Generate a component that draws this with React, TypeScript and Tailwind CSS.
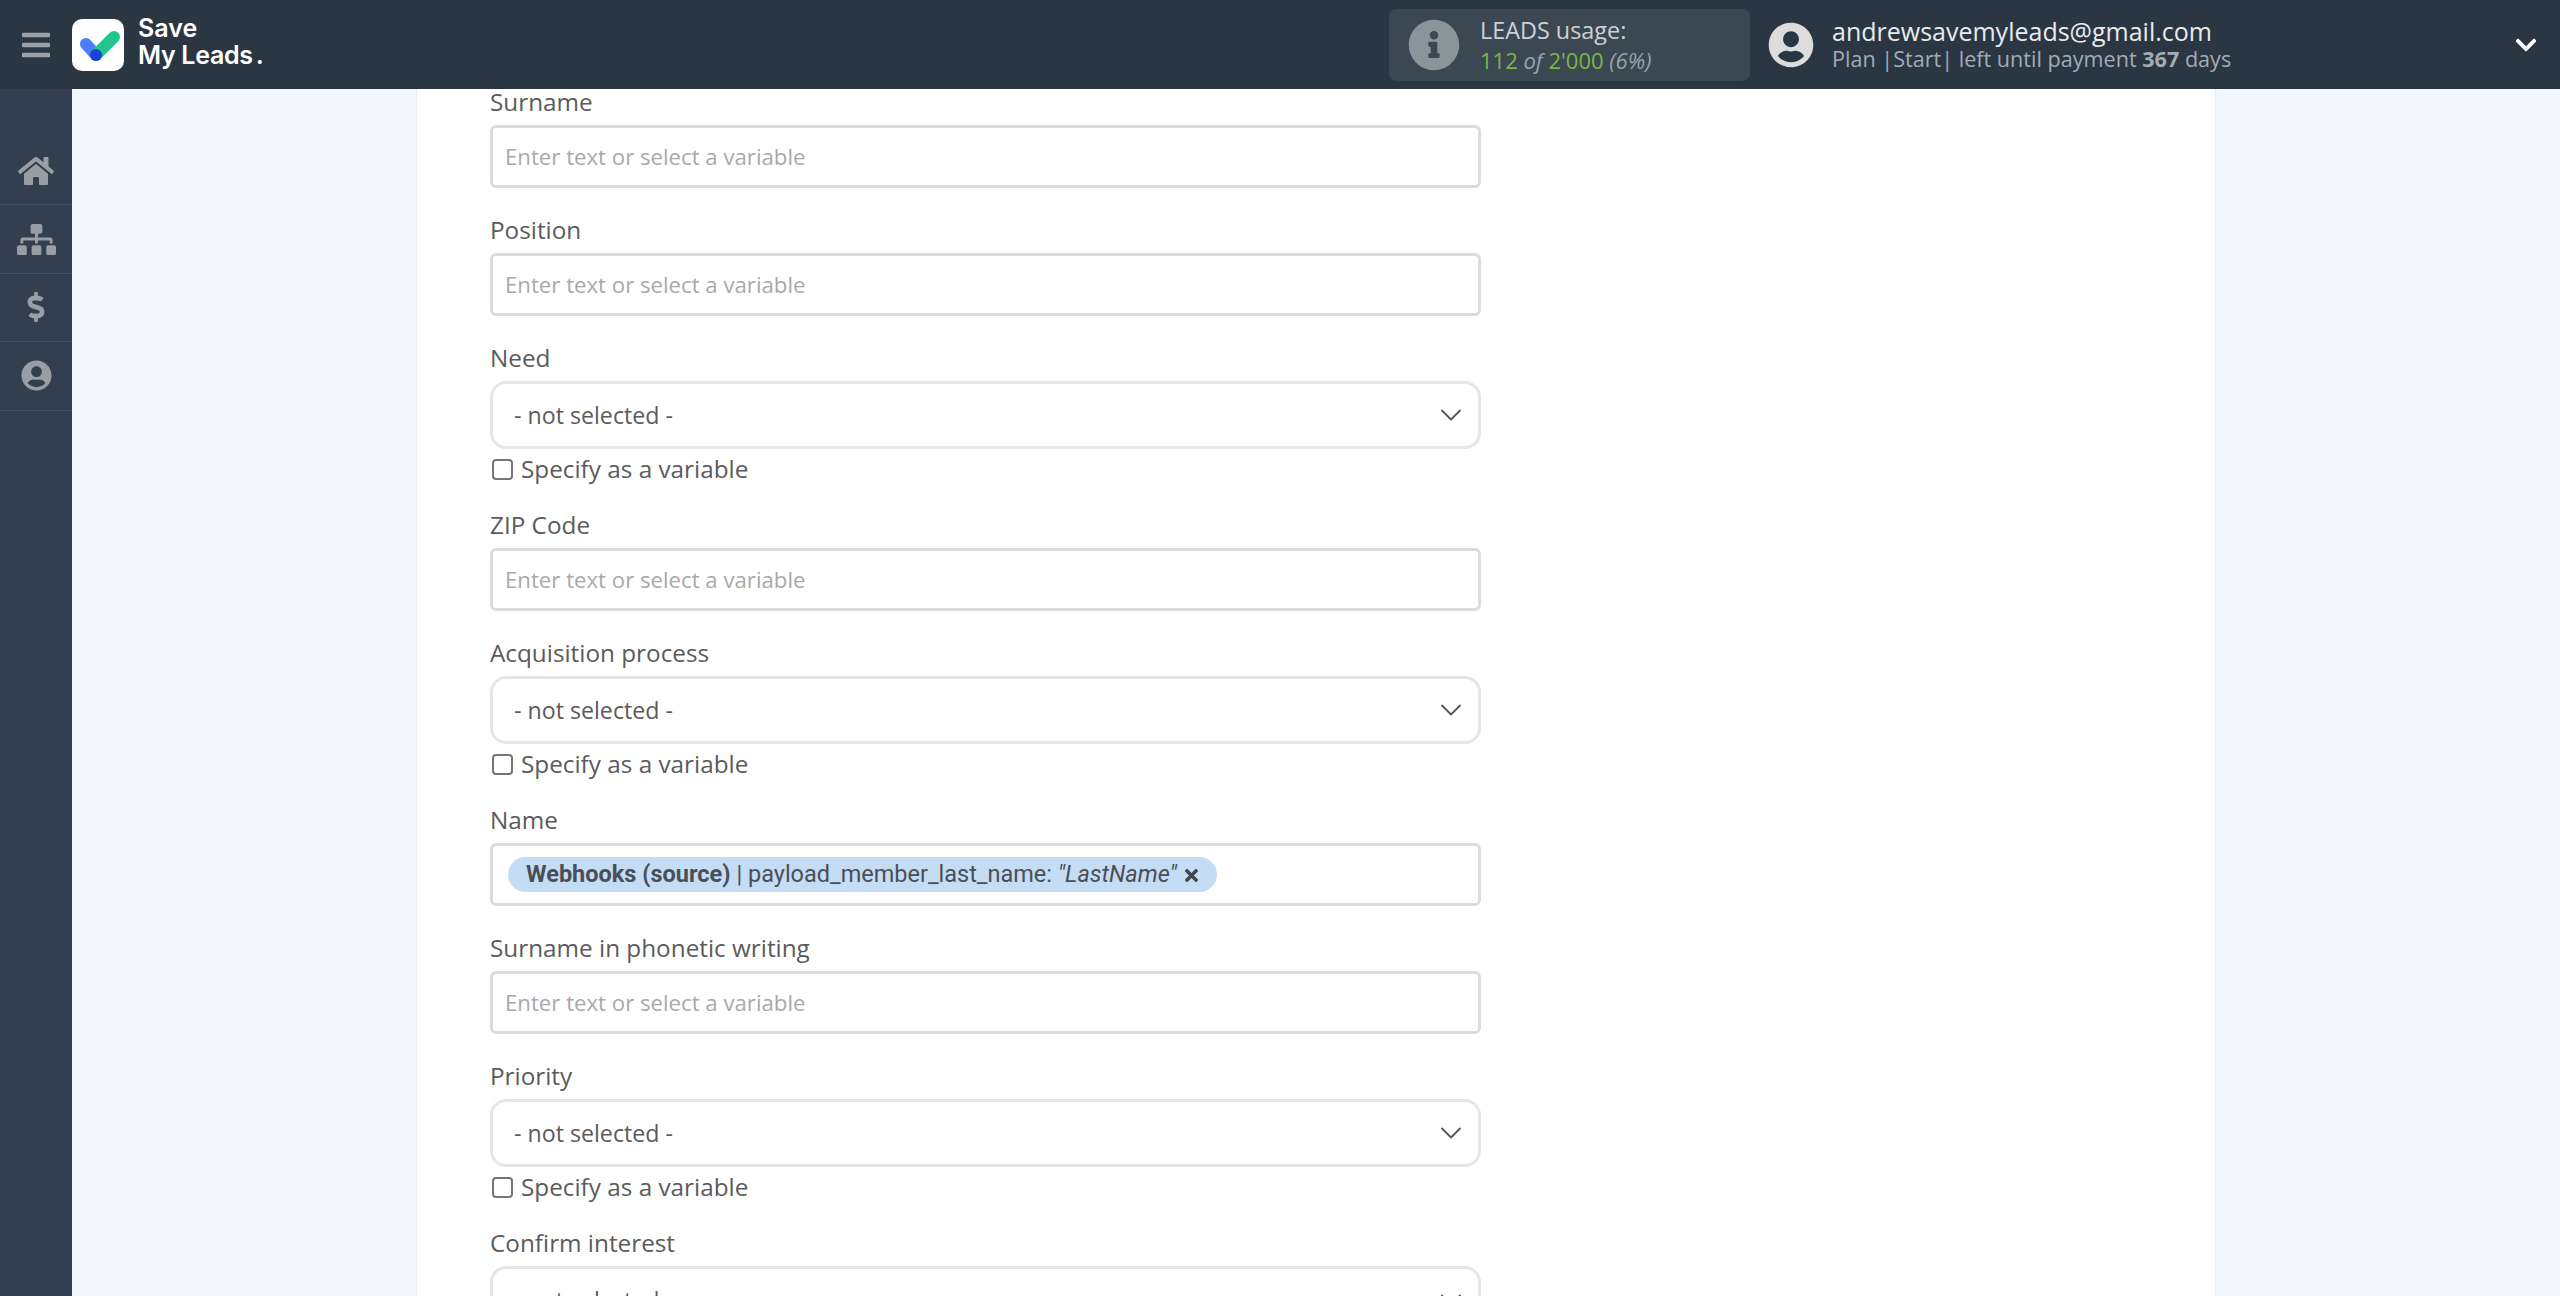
import { ChevronDown } from 'lucide-react';
import {
  FaBars,
  FaChevronDown,
  FaDollarSign,
  FaHome,
  FaInfoCircle,
  FaSitemap,
  FaTimes,
  FaUserCircle,
} from 'react-icons/fa';

const PLACEHOLDER = 'Enter text or select a variable';

function Label({ children }: { children: string }) {
  return <div className="mb-3 h-6 text-[24.3px] leading-[25px] font-medium text-[#5b5b5b]">{children}</div>;
}

function TextField({ label }: { label: string }) {
  return (
    <div className="mb-[29px]">
      <Label>{label}</Label>
      <div className="flex h-[63px] items-center rounded-[6px] border-[3px] border-[#dcdcdc] bg-white pl-[12px] text-[22.2px] text-[#a9a9a9]">
        {PLACEHOLDER}
      </div>
    </div>
  );
}

function SelectField({ label, withCheck = true }: { label: string; withCheck?: boolean }) {
  return (
    <div className="mb-[31px]">
      <Label>{label}</Label>
      <div className="flex h-[68px] items-center justify-between rounded-[16px] border-[3px] border-[#e6e6e6] bg-white pr-[9px] pl-[21px] text-[23.2px] text-[#5b5b5b]">
        <span>- not selected -</span>
        <ChevronDown size={36} strokeWidth={1.2} className="text-[#555555]" />
      </div>
      {withCheck ? (
        <div className="mt-2 flex h-6 items-center gap-[8px] pl-[2px] text-[24.3px] font-medium text-[#5b5b5b]">
          <span className="h-[21px] w-[21px] rounded-[4px] border-2 border-[#767676] bg-white" />
          <span>Specify as a variable</span>
        </div>
      ) : null}
    </div>
  );
}

function ChipField({ label }: { label: string }) {
  return (
    <div className="mb-[29px]">
      <Label>{label}</Label>
      <div className="flex h-[63px] items-center rounded-[6px] border-[3px] border-[#dcdcdc] bg-white pl-[15px]">
        <span className="flex h-[35px] items-center gap-[5px] rounded-[18px] bg-[#c5dcf5] pt-px pr-[16px] pl-[18px] font-['Roboto',sans-serif] text-[23.5px] text-[#4a4f57]">
          <span>
            <b className="font-bold">Webhooks (source)</b> | payload_member_last_name: <i>"LastName"</i>
          </span>
          <FaTimes size={19} className="text-[#40464e]" />
        </span>
      </div>
    </div>
  );
}

function LogoMark() {
  return (
    <div className="h-[52px] w-[52px] shrink-0 rounded-[10px] bg-white">
      <svg viewBox="0 0 52 52" width="52" height="52">
        <path d="M14 25 L24 36" stroke="#4a7dff" strokeWidth="12" strokeLinecap="round" />
        <path d="M24 36 L42 18" stroke="#22c58b" strokeWidth="12" strokeLinecap="round" />
        <circle cx="24" cy="36" r="6" fill="#1f3fd6" />
      </svg>
    </div>
  );
}

function Header() {
  return (
    <header className="flex h-[89px] shrink-0 items-center bg-[#2b3643] font-['Open_Sans',sans-serif]">
      <div className="flex w-[72px] shrink-0 justify-center">
        <FaBars size={32} className="text-[#9ca1a6]" />
      </div>
      <LogoMark />
      <div className="mb-[6px] ml-[14px] w-[130px] shrink-0 font-['Inter',sans-serif] text-[25px] leading-[27px] font-semibold text-white">
        <div>Save</div>
        <div className="tracking-[-0.3px]">
          My Leads<span className="ml-[3px]">.</span>
        </div>
      </div>

      <div className="ml-[1121px] flex h-[72px] w-[361px] shrink-0 items-center gap-[20px] rounded-[8px] bg-[#3b4852] pl-[19px]">
        <FaInfoCircle size={52} className="text-[#8a9499]" />
        <div className="leading-[30px]">
          <div className="text-[23.4px] text-[#cbd2d6]">LEADS usage:</div>
          <div className="text-[22px] italic text-[#9aa3a8]">
            <span className="not-italic text-[#7ab648]">112</span> of{' '}
            <span className="not-italic text-[#7ab648]">2'000</span> (6%)
          </div>
        </div>
      </div>

      <FaUserCircle size={46} className="ml-[18px] text-[#dcdcdc]" />
      <div className="ml-[18px] flex-1 text-[#e9ebed]">
        <div className="text-[25px] leading-[28px]">andrewsavemyleads@gmail.com</div>
        <div className="text-[21.6px] leading-[28px] text-[#a3abb3]">
          Plan |Start| left until payment <b className="font-bold">367</b> days
        </div>
      </div>
      <FaChevronDown size={24} className="mr-[22px] text-white" />
    </header>
  );
}

function Sidebar() {
  const items = [
    { Icon: FaHome, size: 36 },
    { Icon: FaSitemap, size: 39 },
    { Icon: FaDollarSign, size: 30 },
    { Icon: FaUserCircle, size: 31 },
  ];
  return (
    <nav className="w-[72px] shrink-0 bg-[#333f4e] pt-[48px]">
      {items.map(({ Icon, size }, idx) => (
        <div key={idx} className="flex h-[68.4px] items-center justify-center border-b border-[#46525f]">
          <Icon size={size} className="text-[#989ea3]" />
        </div>
      ))}
    </nav>
  );
}

export default function App() {
  return (
    <div className="flex h-[1296px] w-[2560px] flex-col overflow-hidden font-['Open_Sans',sans-serif]">
      <Header />
      <div className="flex min-h-0 flex-1">
        <Sidebar />
        <main className="min-h-0 flex-1 overflow-hidden bg-[#f3f6fc] pl-[344px]">
          <div className="h-full w-[1800px] overflow-hidden border-l border-r border-[#e9ecf1] bg-white pr-[734px] pl-[73px]">
            <TextField label="Surname" />
            <TextField label="Position" />
            <SelectField label="Need" />
            <TextField label="ZIP Code" />
            <SelectField label="Acquisition process" />
            <ChipField label="Name" />
            <TextField label="Surname in phonetic writing" />
            <SelectField label="Priority" />
            <SelectField label="Confirm interest" withCheck={false} />
          </div>
        </main>
      </div>
    </div>
  );
}
